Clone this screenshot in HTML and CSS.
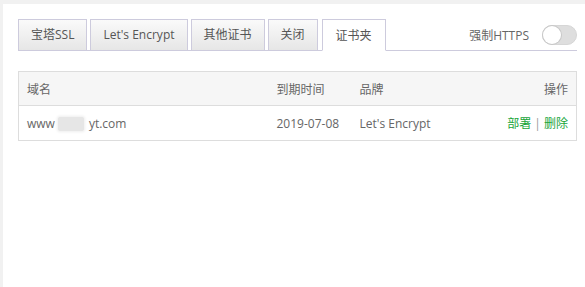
FILE: index.html
```html
<!DOCTYPE html>
<html lang="zh-CN">
<head>
  <meta charset="UTF-8">
  <title>SSL</title>
  <link rel="stylesheet" href="styles.css">
</head>
<body>
  <div class="panel">
    <div class="tab-bar">
      <ul class="tabs">
        <li>宝塔SSL</li>
        <li>Let's Encrypt</li>
        <li>其他证书</li>
        <li>关闭</li>
        <li class="active">证书夹</li>
      </ul>
      <div class="force-https">
        <span>强制HTTPS</span>
        <span class="switch"><i></i></span>
      </div>
    </div>

    <table class="cert-table">
      <thead>
        <tr>
          <th class="col-domain">域名</th>
          <th class="col-date">到期时间</th>
          <th class="col-brand">品牌</th>
          <th class="col-op">操作</th>
        </tr>
      </thead>
      <tbody>
        <tr>
          <td>www<span class="blur"></span>yt.com</td>
          <td>2019-07-08</td>
          <td>Let's Encrypt</td>
          <td class="col-op"><a href="#">部署</a> <span class="sep">|</span> <a href="#">删除</a></td>
        </tr>
      </tbody>
    </table>
  </div>
</body>
</html>
```

FILE: styles.css
```css
html, body {
  margin: 0;
  background: #f1f1f1;
  font-family: "Open Sans", "Noto Sans CJK SC", sans-serif;
  font-size: 12px;
  color: #666;
}

.panel {
  margin: 4px 0 0 3px;
  height: 283px;
  background: #fff;
  padding: 15px 8px 0 15px;
  box-sizing: border-box;
}

.tab-bar {
  display: flex;
  align-items: center;
  border-bottom: 1px solid #cdcbdd;
  height: 31px;
}

.tabs {
  display: flex;
  list-style: none;
  margin: 0;
  padding: 0;
  align-self: flex-end;
  margin-bottom: -1px;
}

.tabs li {
  height: 30px;
  line-height: 30px;
  padding: 0 12px;
  margin-right: 3px;
  border: 1px solid #cdcbdd;
  background: linear-gradient(#fafafa, #e6e6e6);
  color: #555;
}

.tabs li.active {
  background: #fff;
  border-bottom-color: #fff;
  padding: 0 13px;
  margin-left: 1px;
  line-height: 32px;
}

.force-https {
  margin-left: auto;
  display: flex;
  align-items: center;
  gap: 13px;
  color: #666;
}

.switch {
  width: 35px;
  height: 20px;
  border-radius: 10px;
  background: #dedede;
  position: relative;
  box-sizing: border-box;
  border: 1px solid #d6d6d6;
}

.switch i {
  position: absolute;
  left: 0;
  top: 0;
  width: 18px;
  height: 18px;
  border-radius: 50%;
  background: #fff;
  box-shadow: 0 0 0 1px #c8c8c8;
}

.cert-table {
  width: 100%;
  margin-top: 20px;
  border-collapse: collapse;
  border: 1px solid #ddd;
  table-layout: fixed;
}

.cert-table th,
.cert-table td {
  height: 34px;
  padding: 0 8px;
  text-align: left;
  font-weight: normal;
  white-space: nowrap;
  box-sizing: border-box;
}

.cert-table td {
  height: 35px;
}

.cert-table th {
  background: #f6f6f6;
  border-bottom: 1px solid #ddd;
}

.col-domain { width: 250px; }
.col-date { width: 83px; }
.col-brand { width: 120px; }
.cert-table .col-op { text-align: right; }

.blur {
  display: inline-block;
  width: 26px;
  height: 14px;
  margin: 0 5px 0 3px;
  vertical-align: middle;
  background: #e6e6e6;
  border-radius: 2px;
  box-shadow: 0 0 3px 1px #eee;
}

.col-op a {
  color: #20a53a;
  text-decoration: none;
}

.sep { color: #999; }
```
